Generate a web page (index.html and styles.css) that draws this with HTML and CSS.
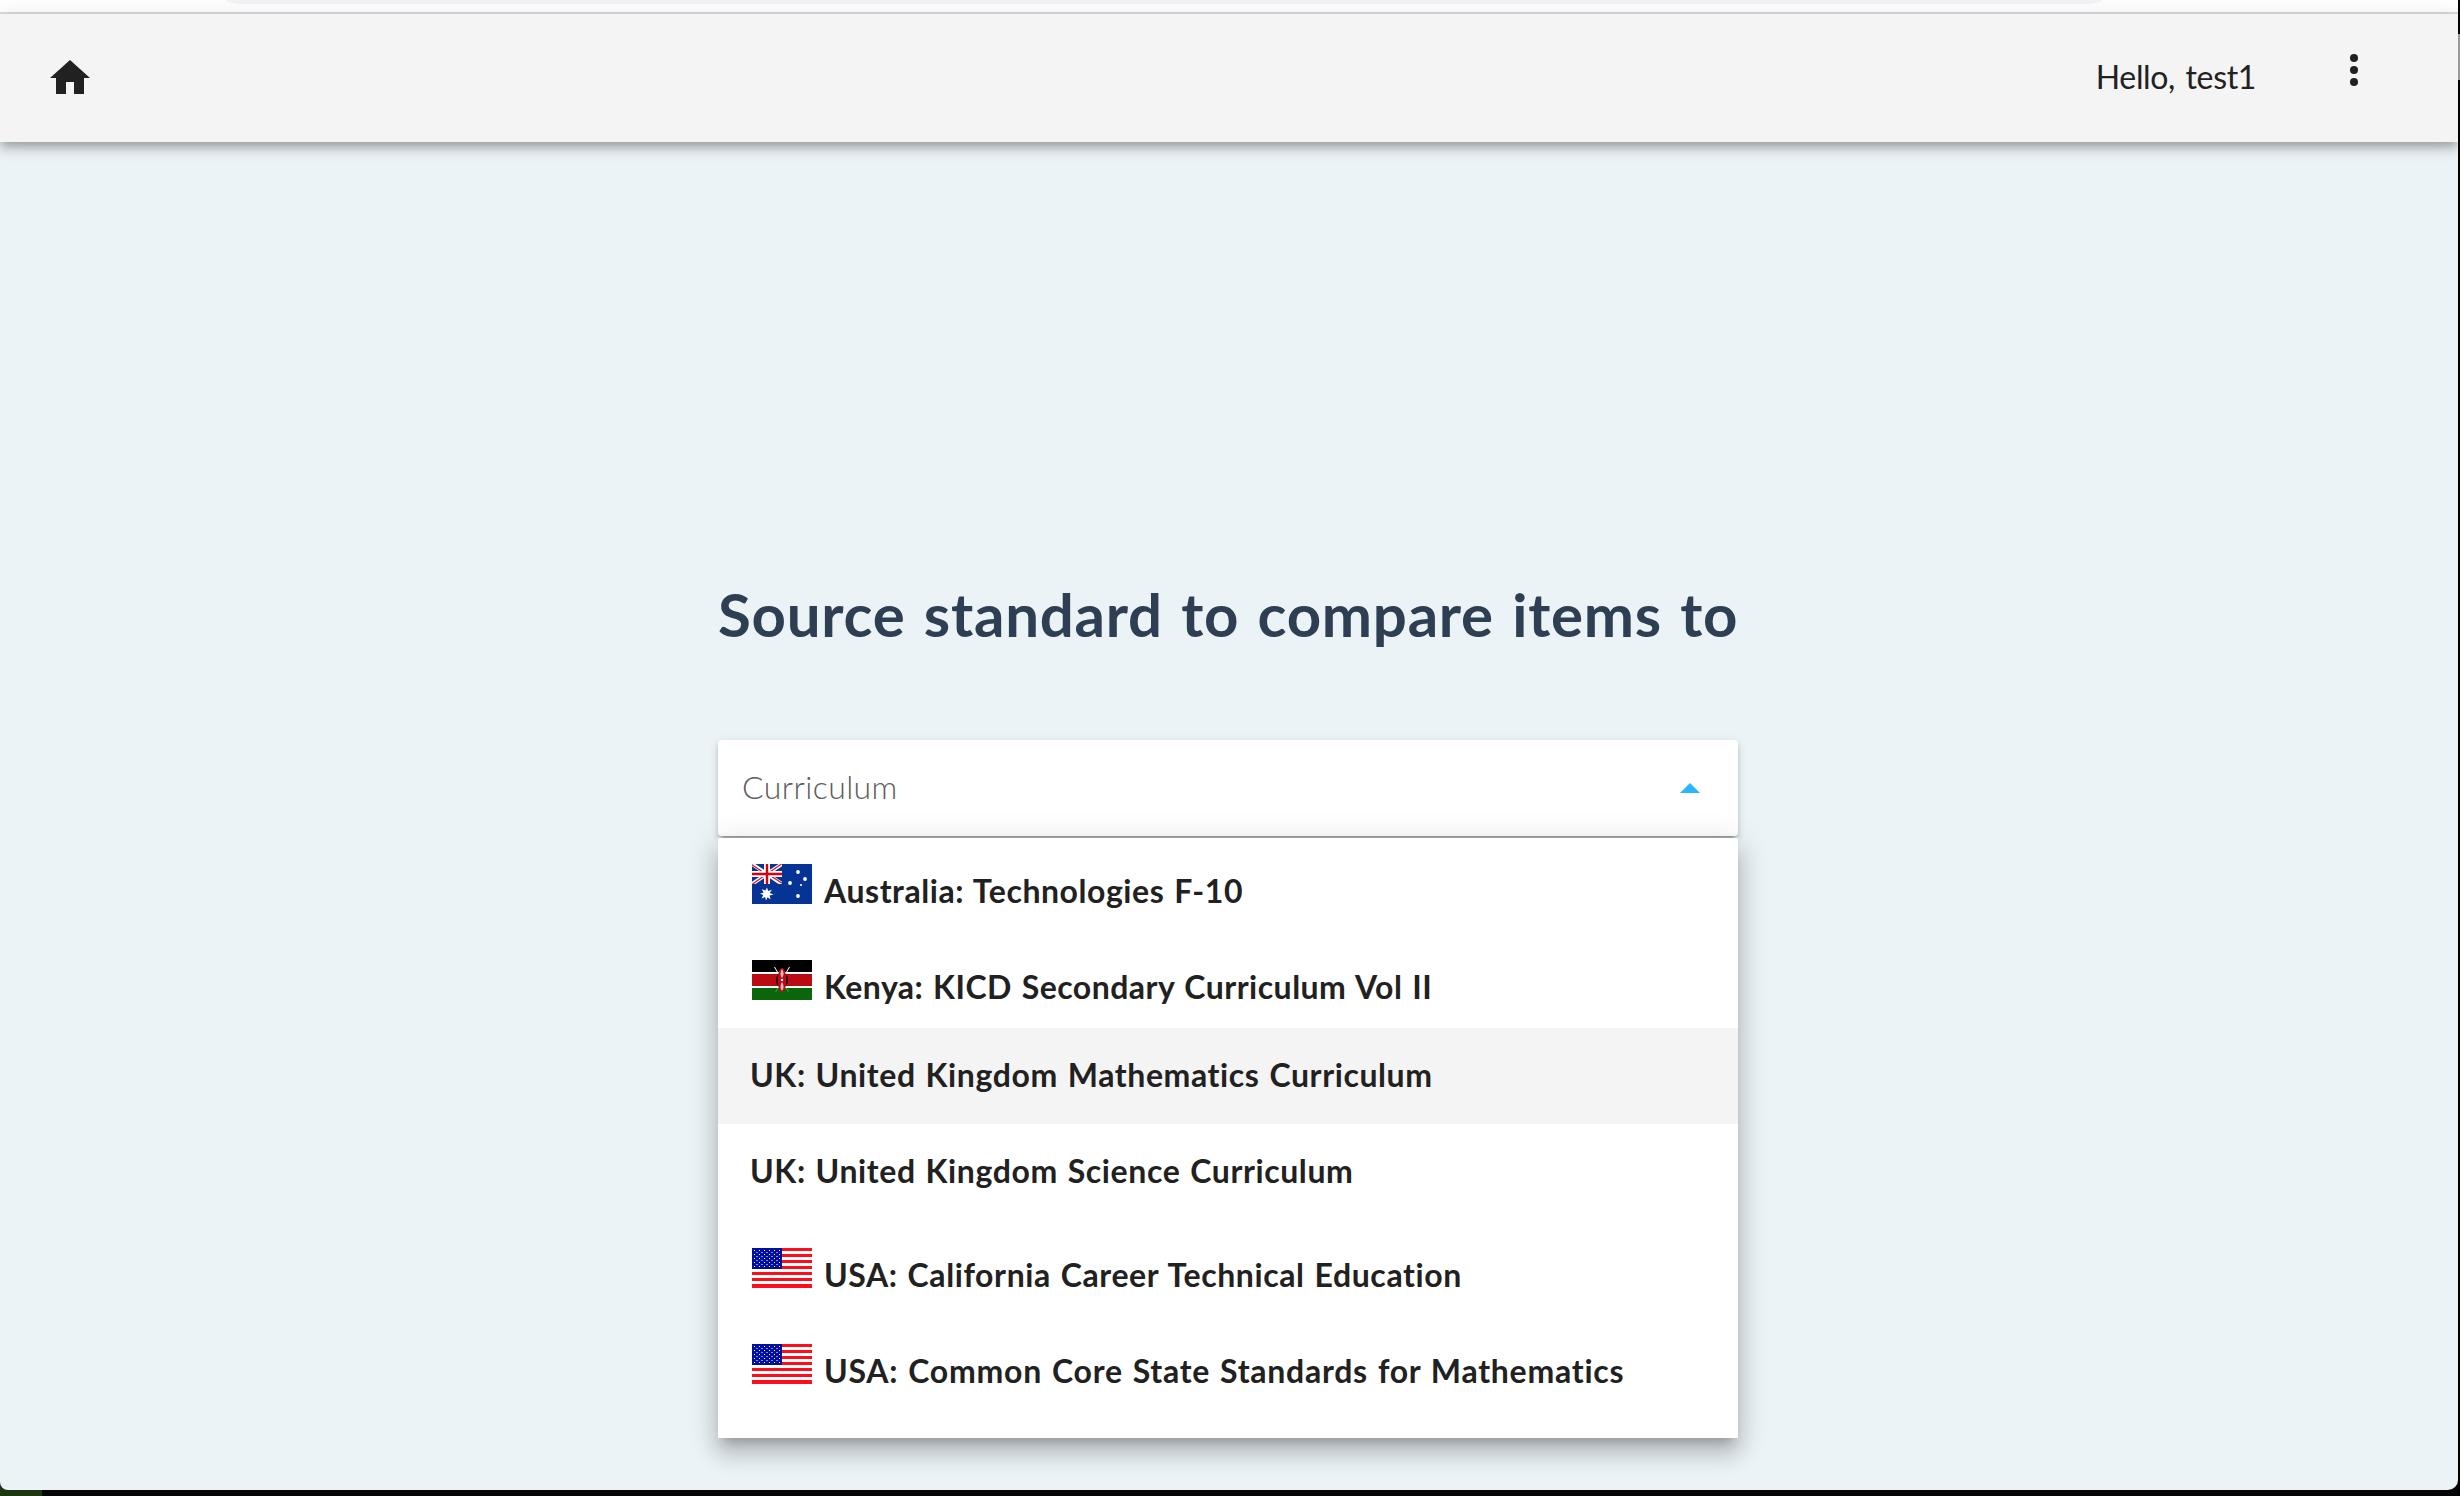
FILE: index.html
```html
<!DOCTYPE html>
<html lang="en">
<head>
<meta charset="utf-8">
<title>Source standard</title>
<link rel="stylesheet" href="styles.css">
</head>
<body>
<svg class="defs" aria-hidden="true">
  <defs>
    <pattern id="stars" width="5" height="4" patternUnits="userSpaceOnUse">
      <rect x="2" y="2" width="1" height="1" fill="#fff"/>
      <rect x="4.5" y="0" width=".5" height="1" fill="#fff"/>
      <rect x="0" y="0" width=".5" height="1" fill="#fff"/>
    </pattern>
    <symbol id="flag-us" viewBox="0 0 60 40">
      <path fill="#fff" d="M0 0h60v40H0z"/>
      <path fill="#ff0d1b" d="M0 0h60v3H0zM0 6h60v3H0zM0 12h60v3H0zM0 18h60v3H0zM0 24h60v3H0zM0 30h60v3H0zM0 36h60v4H0z"/>
      <path fill="#00109c" d="M0 0h30v21H0z"/>
      <path fill="url(#stars)" d="M1 1h28v19H1z"/>
    </symbol>
    <symbol id="flag-ke" viewBox="0 0 60 40">
      <path fill="#fff" d="M0 0h60v40H0z"/>
      <path d="M0 0h60v12H0z"/>
      <path fill="#bb0a12" d="M0 14h60v12H0z"/>
      <path fill="#0b660b" d="M0 28h60v12H0z"/>
      <path stroke="#fff" stroke-width="1" d="M22.500 7L26 13M37.500 7L34 13"/>
      <path stroke="#5fa05f" stroke-width=".8" d="M23.500 32L26 28M36.500 32L34 28"/>
      <ellipse cx="30" cy="20" rx="6" ry="7.500"/>
      <ellipse cx="30" cy="20" rx="4.300" ry="12" fill="#bb0a12"/>
      <path fill="#f3b9bc" d="M30 9q3 4.500 0 9q-3-4.500 0-9zM30 22q3 4.500 0 9q-3-4.500 0-9z"/>
      <circle cx="30" cy="20" r="1.200" fill="#fff"/>
    </symbol>
    <symbol id="flag-au" viewBox="0 0 60 40">
      <path fill="#053494" d="M0 0h60v40H0z"/>
      <svg width="30" height="20" viewBox="0 0 30 20">
        <path stroke="#fff" stroke-width="3.800" d="M0 0l30 20M30 0L0 20"/>
        <path stroke="#d8142c" stroke-width="1.300" d="M0 .7l14 9.300M30 19.300L16 10M29.500 0L16 9.300M.5 20L14 10.700"/>
        <path stroke="#fff" stroke-width="6" d="M15 0v20M0 10h30"/>
        <path stroke="#d8000f" stroke-width="2.400" d="M15 0v20M0 10h30"/>
      </svg>
      <path fill="#fff" d="M15 23.500l1.200 3.600 3.700-1.300-2.200 3.200 3.800 1.600-3.900.9 1 3.900-3.100-2.200-1.500 3.400-.9-3.600-3.500 1.600 1.600-3.500-3.200-1.500 3.700-.9-1.900-3.400 3.600 1.300z"/>
      <g fill="#fff">
        <circle cx="46" cy="8" r="1.900"/><circle cx="53" cy="15" r="1.900"/>
        <circle cx="38" cy="19" r="1.900"/><circle cx="49" cy="21" r="1.100"/>
        <circle cx="46" cy="32" r="1.900"/>
      </g>
    </symbol>
  </defs>
</svg>
<div class="window">
  <div class="chrome"><div class="address"></div></div>
  <header class="nav">
    <svg class="home" viewBox="0 0 40 34"><path d="M20 0L0 18h6v16h10V22h8v12h10V18h6z"/></svg>
    <span class="greeting">Hello, test1</span>
    <svg class="more" viewBox="0 0 8 32"><circle cx="4" cy="4" r="4"/><circle cx="4" cy="16" r="4"/><circle cx="4" cy="28" r="4"/></svg>
  </header>
  <main class="page">
    <div class="picker">
      <h1 class="title">Source standard to compare items to</h1>
      <div class="field">
        <span class="placeholder">Curriculum</span>
        <svg class="caret" viewBox="0 0 20 10"><path d="M0 10L10 0l10 10z"/></svg>
      </div>
      <div class="menu">
        <ul class="options">
          <li class="option flagged"><svg class="flag"><use href="#flag-au"/></svg><span class="au">Australia: Technologies F-10</span></li>
          <li class="option flagged"><svg class="flag"><use href="#flag-ke"/></svg><span class="ke">Kenya: KICD Secondary Curriculum Vol II</span></li>
          <li class="option active"><span>UK: United Kingdom Mathematics Curriculum</span></li>
          <li class="option"><span>UK: United Kingdom Science Curriculum</span></li>
          <li class="option flagged"><svg class="flag"><use href="#flag-us"/></svg><span>USA: California Career Technical Education</span></li>
          <li class="option flagged"><svg class="flag"><use href="#flag-us"/></svg><span class="core">USA: Common Core State Standards for Mathematics</span></li>
        </ul>
      </div>
    </div>
  </main>
</div>
<div class="scroll-edge"></div>
</body>
</html>
```
FILE: styles.css
```css
* { box-sizing: border-box; }
body {
  margin: 0;
  width: 2460px;
  height: 1496px;
  overflow: hidden;
  display: flex;
  background: linear-gradient(90deg, #1b3712 0 42px, #030507 42px);
  font-family: Lato, "Liberation Sans", sans-serif;
  font-variant-ligatures: none;
  color: #212121;
}
.defs { position: absolute; width: 0; height: 0; }
.window {
  width: 2458px;
  height: 1490px;
  overflow: hidden;
  display: flex;
  flex-direction: column;
  border-radius: 0 0 10px 8px;
  background: #ebf3f7;
}
.chrome {
  height: 14px;
  flex: none;
  background: #fff;
  border-bottom: 2px solid #dadae0;
}
.address {
  height: 4px;
  margin: 0 356px 0 226px;
  background: #f1f3f4;
  border-radius: 0 0 18px 18px / 0 0 4px 4px;
}
.nav {
  height: 128px;
  flex: none;
  display: flex;
  align-items: flex-start;
  padding: 0 100px 0 50px;
  background: #f4f4f4;
  box-shadow: 0 4px 8px -2px rgba(0,0,0,.2), 0 8px 10px rgba(0,0,0,.14), 0 2px 20px rgba(0,0,0,.12);
  fill: #212121;
}
.home { width: 40px; height: 34px; margin-top: 46px; }
.greeting {
  margin: 43px 94px 0 auto;
  font-size: 32px;
  line-height: 40px;
  word-spacing: 2.7px;
  letter-spacing: -.35px;
}
.more { width: 8px; height: 32px; margin-top: 40px; }
.page { display: flex; justify-content: center; padding-right: 2px; }
.picker { width: 1020px; margin-top: 442px; }
.title {
  margin: 0 0 96px;
  font-size: 60px;
  line-height: 60px;
  font-weight: 700;
  color: #2e3f53;
  white-space: nowrap;
  word-spacing: 3px;
  letter-spacing: .74px;
}
.field {
  height: 96px;
  display: flex;
  align-items: center;
  justify-content: space-between;
  padding: 0 38px 2px 24px;
  border-radius: 4px;
  background: #fff;
  box-shadow: 0 6px 2px -4px rgba(0,0,0,.2), 0 4px 4px rgba(0,0,0,.14), 0 2px 10px rgba(0,0,0,.12);
}
.placeholder {
  padding-bottom: 1px;
  font-size: 32px;
  font-weight: 300;
  color: #5c5c5c;
  letter-spacing: .4px;
}
.caret { width: 20px; height: 10px; margin-top: 1px; fill: #29b6fc; }
.menu {
  position: relative;
  height: 600px;
  margin-top: 2px;
  overflow: hidden;
  background: #fff;
  box-shadow: 0 10px 10px -6px rgba(0,0,0,.2), 0 16px 20px 2px rgba(0,0,0,.14), 0 6px 28px 4px rgba(0,0,0,.12);
}
.options { list-style: none; margin: -2px 0 0; padding: 0; }
.option {
  height: 96px;
  display: flex;
  align-items: flex-start;
  padding-left: 32px;
  font-size: 32px;
  font-weight: 700;
  line-height: 94px;
  white-space: nowrap;
  word-spacing: 1.5px;
  letter-spacing: .6px;
}
.active { background: #f4f4f4; }
.flagged { padding: 8px 0 0 34px; }
.flag { width: 60px; height: 40px; margin: 20px 12px 0 0; }
.au { letter-spacing: .56px; }
.ke { letter-spacing: .48px; }
.core { letter-spacing: .74px; }
.scroll-edge {
  width: 2px;
  height: 1496px;
  background: linear-gradient(#000 34px, #999 34px 80px, #000 80px);
}
```
